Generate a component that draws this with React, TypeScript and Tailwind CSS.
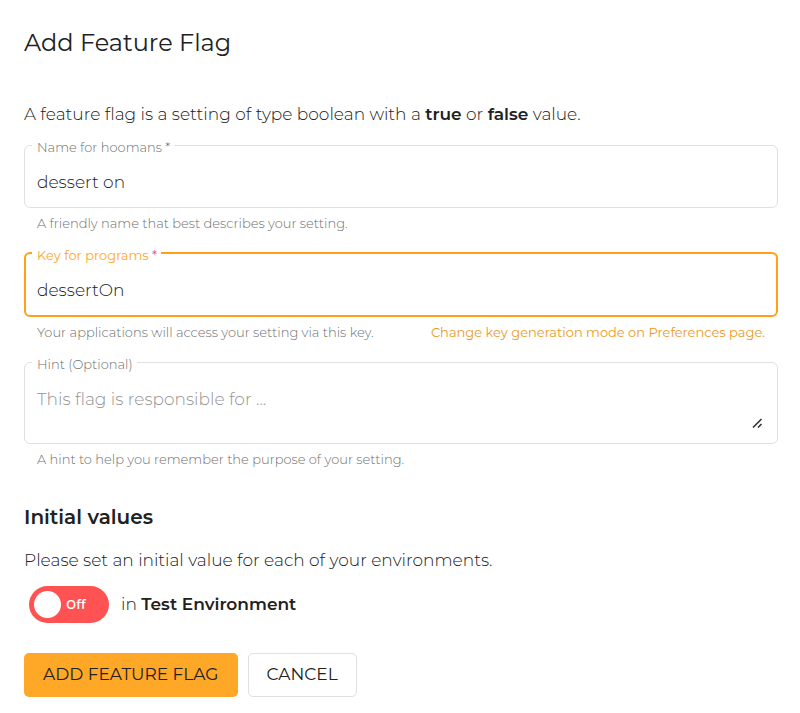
import { useState } from 'react';
import type { ReactNode } from 'react';
import { clsx } from 'clsx';

interface OutlinedFieldProps {
  id: string;
  label: string;
  required?: boolean;
  active?: boolean;
  helper: ReactNode;
  children: ReactNode;
}

// Outlined box with the label sitting in a notch of the top border
function OutlinedField({ id, label, required, active, helper, children }: OutlinedFieldProps) {
  return (
    <div>
      <fieldset
        className={clsx(
          'min-w-0 rounded-md pr-3 pb-3',
          active ? 'border-2 border-[#ffa017] pl-[6px]' : 'border border-[#e0e0e0] pl-[7px]'
        )}
      >
        <legend className="pt-1 pr-1 pl-[5px] text-[13px] leading-[18px]">
          <label htmlFor={id} className={active ? 'font-normal text-[#ffa726]' : 'text-[#707070]'}>
            {label}
            {required && <span className={active ? 'text-[#ff4081]' : undefined}> *</span>}
          </label>
        </legend>
        {children}
      </fieldset>
      <div className="mt-[5px] flex justify-between gap-4 px-[13px] text-[13px] leading-5 text-[#707070]">{helper}</div>
    </div>
  );
}

export default function App() {
  const [name, setName] = useState('dessert on');
  const [key, setKey] = useState('dessertOn');
  const [hint, setHint] = useState('');
  const [enabled, setEnabled] = useState(false);

  return (
    <form
      className="bg-white pt-[27px] pr-[22px] pb-4 pl-6 font-['Montserrat','Inter',sans-serif] text-[17px] font-light text-[#212121]"
      onSubmit={(e) => e.preventDefault()}
    >
      <h1 className="text-2xl leading-8 font-normal">Add Feature Flag</h1>

      <p className="mt-[41px] leading-7">
        A feature flag is a setting of type boolean with a <strong className="font-semibold">true</strong> or{' '}
        <strong className="font-semibold">false</strong> value.
      </p>

      <div className="mt-[6px] flex flex-col gap-[9px]">
        <OutlinedField
          id="name"
          label="Name for hoomans"
          required
          helper={<span>A friendly name that best describes your setting.</span>}
        >
          <input
            id="name"
            type="text"
            value={name}
            onChange={(e) => setName(e.target.value)}
            className="mt-[15px] block h-6 w-full px-[5px] outline-none"
          />
        </OutlinedField>

        <OutlinedField
          id="key"
          label="Key for programs"
          required
          active
          helper={
            <>
              <span>Your applications will access your setting via this key.</span>
              <a href="#preferences" className="font-normal text-[#eb9a1d]">
                Change key generation mode on Preferences page.
              </a>
            </>
          }
        >
          <input
            id="key"
            type="text"
            value={key}
            onChange={(e) => setKey(e.target.value)}
            className="mt-[15px] block h-6 w-full px-[5px] outline-none"
          />
        </OutlinedField>

        <OutlinedField
          id="hint"
          label="Hint (Optional)"
          helper={<span>A hint to help you remember the purpose of your setting.</span>}
        >
          <div className="relative">
            <textarea
              id="hint"
              rows={2}
              value={hint}
              onChange={(e) => setHint(e.target.value)}
              placeholder="This flag is responsible for ..."
              className="mt-[14px] block h-11 w-full resize-y px-[5px] leading-6 outline-none placeholder:text-[#949494] [&::-webkit-resizer]:appearance-none"
            />
            <svg
              className="pointer-events-none absolute right-0 bottom-0 size-4 text-[#333]"
              viewBox="0 0 16 16"
              fill="none"
              stroke="currentColor"
              strokeWidth={1.6}
              aria-hidden="true"
            >
              <path d="M4 12.5 12.5 4M9 12.5 12.5 9" />
            </svg>
          </div>
        </OutlinedField>
      </div>

      <h2 className="mt-[33px] text-xl leading-[30px] font-semibold">Initial values</h2>
      <p className="mt-[14px] leading-7">Please set an initial value for each of your environments.</p>

      <div className="mt-3 ml-[5px] flex items-center gap-3">
        <button
          type="button"
          role="switch"
          aria-checked={enabled}
          aria-labelledby="environment"
          onClick={() => setEnabled(!enabled)}
          className={clsx(
            "flex h-[37px] w-20 items-center gap-[5px] rounded-full px-[5px] font-['Open_Sans',sans-serif] text-[13px] font-semibold text-white",
            enabled ? 'flex-row-reverse bg-[#4caf50]' : 'bg-[#ff5252]'
          )}
        >
          <span className="size-[27px] rounded-full bg-white" />
          {enabled ? 'On' : 'Off'}
        </button>
        <span id="environment">
          in <strong className="font-semibold">Test Environment</strong>
        </span>
      </div>

      <div className="mt-[30px] flex gap-[10px]">
        <button type="submit" className="h-11 rounded-[5px] bg-[#ffa726] px-[19px] font-normal">
          ADD FEATURE FLAG
        </button>
        <button type="button" className="h-11 rounded-[5px] border border-[#e0e0e0] bg-white px-[18px] font-normal">
          CANCEL
        </button>
      </div>
    </form>
  );
}
